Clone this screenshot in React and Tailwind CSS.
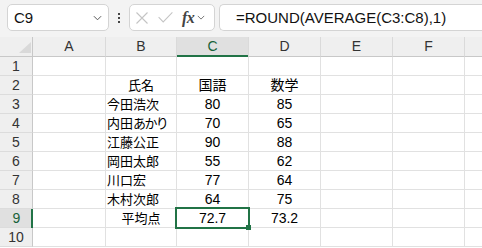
import React from "react";

const ROWS = [
  null,
  { b: "氏名", c: "国語", d: "数学", bAlign: "center" },
  { b: "今田浩次", c: "80", d: "85" },
  { b: "内田あかり", c: "70", d: "65" },
  { b: "江藤公正", c: "90", d: "88" },
  { b: "岡田太郎", c: "55", d: "62" },
  { b: "川口宏", c: "77", d: "64" },
  { b: "木村次郎", c: "64", d: "75" },
  { b: "平均点", c: "72.7", d: "73.2", bAlign: "center", sel: true },
  null,
];

const COLS = [
  { k: "A", w: "w-[73px]" },
  { k: "B", w: "w-[71px]" },
  { k: "C", w: "w-[72px]" },
  { k: "D", w: "w-[72px]" },
  { k: "E", w: "w-[72px]" },
  { k: "F", w: "w-[72px]" },
];

function Chevron({ className }) {
  return (
    <svg viewBox="0 0 10 6" className={className} fill="none" stroke="currentColor" strokeWidth="1.1">
      <path d="M1 1 L5 5 L9 1" />
    </svg>
  );
}

function BText({ text }) {
  if (text === "内田あかり") {
    return (
      <span>
        内田<span className="tracking-[-1.6px]">あかり</span>
      </span>
    );
  }
  return <span>{text}</span>;
}

export default function App() {
  return (
    <div className="w-[482px] h-[248px] overflow-hidden bg-white font-['Liberation_Sans','Noto_Sans_CJK_JP',sans-serif] text-black select-none">
      {/* Toolbar */}
      <div className="h-[37px] bg-[#f3f3f3] flex items-start pt-[4px]">
        <div className="ml-[7px] w-[102px] h-[27px] bg-white border border-[#d4d4d4] rounded-[5px] flex items-center pl-[6px] pr-[6px]">
          <span className="text-[15px] text-[#111] flex-1 leading-none">C9</span>
          <Chevron className="w-[9px] h-[6px] text-[#555]" />
        </div>
        <div className="w-[20px] h-[27px] flex flex-col items-center justify-center gap-[2px]">
          <div className="w-[2px] h-[2px] bg-[#444]" />
          <div className="w-[2px] h-[2px] bg-[#444]" />
          <div className="w-[2px] h-[2px] bg-[#444]" />
        </div>
        <div className="w-[86px] h-[27px] bg-white border border-[#d4d4d4] rounded-[5px] flex items-center pl-[6px]">
          <svg viewBox="0 0 12 12" className="w-[12px] h-[12px]" fill="none" stroke="#c4c4c4" strokeWidth="1.1">
            <path d="M0.5 0.5 L11.5 11.5 M11.5 0.5 L0.5 11.5" />
          </svg>
          <svg viewBox="0 0 16 12" className="w-[15px] h-[11px] ml-[10px]" fill="none" stroke="#c4c4c4" strokeWidth="1.1">
            <path d="M0.5 5.5 L5.5 10.8 L15.5 0.5" />
          </svg>
          <span className="ml-[9px] font-['Liberation_Serif',serif] italic font-bold text-[16px] text-[#444] leading-none tracking-[-0.5px]">
            fx
          </span>
          <Chevron className="ml-[3px] w-[8px] h-[5px] text-[#666]" />
        </div>
        <div className="ml-[4px] flex-1 h-[27px] bg-white border border-r-0 border-[#d4d4d4] rounded-l-[5px] flex items-center pl-[16px] whitespace-nowrap">
          <span className="text-[15px] text-[#111] leading-none">=ROUND(AVERAGE(C3:C8),1)</span>
        </div>
      </div>

      {/* Column header */}
      <div className="flex h-[20px] bg-[#efefef]">
        <div className="w-[33px] h-[20px] border-r border-b border-[#c8c8c8] relative">
          <svg viewBox="0 0 12 11" className="absolute left-[19px] top-[5px] w-[12px] h-[11px]">
            <path d="M12 0 L12 11 L0 11 Z" fill="#d9d9d9" />
          </svg>
        </div>
        {COLS.map((c) => (
          <div
            key={c.k}
            className={`${c.w} h-[20px] border-b border-[#c8c8c8] flex items-center justify-center text-[14px] relative ${
              c.k === "C" ? "bg-[#e0e0e0] text-[#176239]" : "text-[#333] border-r border-r-[#dadada]"
            } ${c.k === "C" ? "border-r border-r-[#dadada]" : ""}`}
          >
            {c.k}
            {c.k === "C" && <div className="absolute left-0 right-0 -bottom-[1px] h-[2px] bg-[#217346]" />}
          </div>
        ))}
        <div className="flex-1 h-[20px] border-b border-[#c8c8c8]" />
      </div>

      {/* Rows */}
      {ROWS.map((r, i) => {
        const n = i + 1;
        const sel = r && r.sel;
        return (
          <div key={n} className="flex h-[19px]">
            <div
              className={`w-[33px] h-[19px] border-b border-[#dcdcdc] flex items-center justify-center text-[14px] leading-none relative ${
                sel ? "bg-[#e0e0e0] text-[#176239]" : "bg-[#efefef] text-[#333] border-r border-r-[#c8c8c8]"
              }`}
            >
              {n}
              {sel && <div className="absolute top-0 -bottom-[1px] right-0 w-[2px] bg-[#217346]" />}
            </div>
            {/* A */}
            <div className="w-[73px] h-[19px] border-r border-b border-[#e1e1e1]" />
            {/* B */}
            <div
              className={`w-[71px] h-[19px] border-r border-b border-[#e1e1e1] flex items-center text-[13px] leading-none whitespace-nowrap ${
                r && r.bAlign === "center" ? "justify-center" : "pl-[1px]"
              }`}
            >
              {r && <BText text={r.b} />}
            </div>
            {/* C */}
            <div className="w-[72px] h-[19px] border-r border-b border-[#e1e1e1] flex items-center justify-center text-[14px] leading-none relative">
              {r && r.c}
              {sel && (
                <div className="absolute -inset-[2px] border-2 border-[#217346] z-10">
                  <div className="absolute w-[5px] h-[5px] bg-[#217346] -right-[3px] -bottom-[3px]" />
                </div>
              )}
            </div>
            {/* D */}
            <div className="w-[72px] h-[19px] border-r border-b border-[#e1e1e1] flex items-center justify-center text-[14px] leading-none">
              {r && r.d}
            </div>
            <div className="w-[72px] h-[19px] border-r border-b border-[#e1e1e1]" />
            <div className="w-[72px] h-[19px] border-r border-b border-[#e1e1e1]" />
            <div className="flex-1 h-[19px] border-b border-[#e1e1e1]" />
          </div>
        );
      })}
    </div>
  );
}
